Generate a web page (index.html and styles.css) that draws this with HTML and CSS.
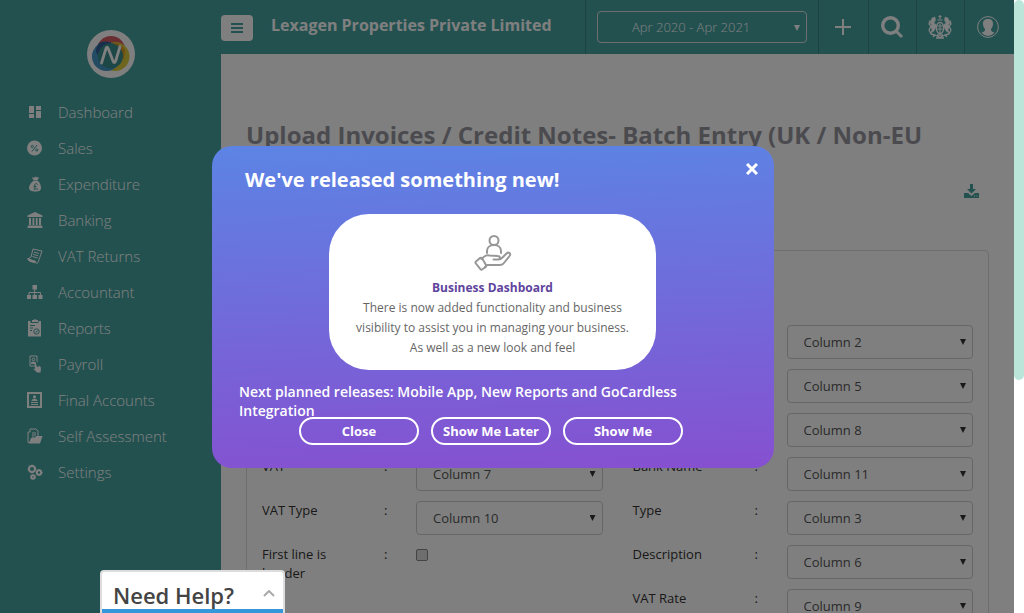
FILE: index.html
```html
<!DOCTYPE html>
<html lang="en">
<head>
<meta charset="utf-8">
<title>Upload Invoices</title>
<link rel="stylesheet" href="styles.css">
</head>
<body>
<div class="app">
  <aside class="sidebar">
    <a href="#" class="logo" aria-label="Home">
      <svg width="48" height="48" viewBox="0 0 48 48">
        <circle cx="24" cy="24" r="24" fill="#fff"/>
        <circle cx="24" cy="20" r="14" fill="#d45a62"/>
        <circle cx="28" cy="26.500" r="14.500" fill="#dccb3c"/>
        <path d="M24 12.500a15 15 0 0 1 14 7.500l-1 10-6-8z" fill="#dd9b22"/>
        <circle cx="19.500" cy="26.500" r="14.500" fill="#4796c8"/>
        <path d="M9 22a14 14 0 0 1 3-9q6-2.500 12-.5l-2 8-9 9z" fill="#345f98"/>
        <circle cx="23.500" cy="26" r="12.500" fill="#3b8f8c"/>
        <path d="M14.500 33l4.500-14.500q1-2.500 2.200 0L26 31q1.500 3 2.700 0L33 16.500" fill="none" stroke="#fff" stroke-width="2.800" stroke-linecap="round"/>
      </svg>
    </a>
    <nav class="menu">
      <a href="#"><svg viewBox="0 0 16 16"><path d="M2 2h5v7H2zM9 2h5v4H9zM2 10h5v4H2zM9 7h5v7H9z"/></svg>Dashboard</a>
      <a href="#"><svg viewBox="0 0 16 16"><circle cx="7.500" cy="8" r="7.500"/><path class="cut" d="M10 5l-5 6.500"/><circle class="cut" cx="5.300" cy="6.500" r="1.100"/><circle class="cut" cx="9.700" cy="10" r="1.100"/></svg>Sales</a>
      <a href="#"><svg viewBox="0 0 16 16"><path d="M5 1l2 .8L9 .5l1 1 2-.5-1.500 3.500h-4zM6 5h5c2 2 3 4.500 3 6.500 0 3-1.500 4-5.500 4S2 14.500 2 11.500C2 9.500 4 7 6 5z"/><path class="cut" d="M10.500 8.500C9.500 6.800 7.300 7.500 7.800 10c.3 1.500 0 2.500-1 3H11M6.500 10.500h3"/></svg>Expenditure</a>
      <a href="#"><svg viewBox="0 0 16 16"><path d="M8 0l7.500 3.500V5H.5V3.500zM2 6h2v7H2zM5.500 6h1.800v7H5.500zM8.800 6h1.800v7H8.800zM12 6h2v7h-2zM1 13.500h14v1H.5V16h15v-1.500H1z"/></svg>Banking</a>
      <a href="#"><svg viewBox="0 0 16 16"><path class="line" d="M6 1l9 2-4 11.500c-1 1.500-3 .5-2.500-1L1 11l3-2z"/><path d="M0 10l8.500 3c-.5 1 .2 2 1.500 2.200C4 15 .5 13 0 10z"/><path class="line" d="M7 4l5 1.500M6.200 6.300l5 1.500M5.500 8.500l5 1.500"/></svg>VAT Returns</a>
      <a href="#"><svg viewBox="0 0 16 16"><path d="M5.500 1h4.500v4.500H5.500zM0 11h4v4H0zM5.500 11h4.500v4H5.500zM11.500 11h4v4h-4z"/><path class="line" d="M7.700 5v6M2 11V8.500h11.500V11"/></svg>Accountant</a>
      <a href="#"><svg viewBox="0 0 16 18"><path d="M1 2h2.500v2h8V2h2.500v15.500H1zM5 1h1.500L8 0l1.500 1H11v2H5z"/><path class="cut" d="M3 6.500h5M3 9h3M3 11.500h2"/><circle class="cut" cx="9.500" cy="12.500" r="2.700"/><path class="cut" d="M8.500 13.500l2.500-2"/></svg>Reports</a>
      <a href="#"><svg viewBox="0 0 16 18"><path class="line" d="M8 11H3V1h7v6"/><circle class="line" cx="6.500" cy="4.500" r="1.300"/><path d="M4 9V7.500l2.500-1L9 7.500V9z"/><path d="M7.500 7.500c1 0 1.200.5 1.500 1.500l1 3 3-1 1 2-.5 4.500h-3.500L6 13.500l2 .5z"/></svg>Payroll</a>
      <a href="#"><svg viewBox="0 0 16 16"><rect class="line bold" x="1" y="1" width="13" height="14"/><circle cx="7.500" cy="4.800" r="1.600"/><path d="M4.500 9c0-3 6-3 6 0zM4 10h7v1H4zM4 12h7v1H4z"/></svg>Final Accounts</a>
      <a href="#"><svg viewBox="0 0 16 16"><path class="line" d="M3 14.500H1V4h2V1h6l2 2v5M5 5h4M5 7h4M5 9h2"/><path d="M4 10l4-.5 1-1.500h6.500L13 15.500H2z"/></svg>Self Assessment</a>
      <a href="#"><svg viewBox="0 0 16 16"><circle class="line bold" cx="5" cy="5" r="3"/><circle class="line bold" cx="12" cy="8.500" r="2.200"/><circle class="line bold" cx="6" cy="13" r="1.800"/><path class="line" d="M5 .5V2M5 8v1.500M.5 5H2M8 5h1.500M1.800 1.800l1.200 1.200M7 7l1.200 1.200M12 5v1.500M12 10.500V12M14.500 8.500h1"/></svg>Settings</a>
    </nav>
  </aside>

  <div class="main">
    <header class="topbar">
      <div class="brand">
        <button class="burger" aria-label="Toggle menu"><span></span><span></span><span></span></button>
        <strong class="company">Lexagen Properties Private Limited</strong>
      </div>
      <div class="cell period">
        <div class="pick"><select aria-label="Accounting period"><option>Apr 2020 - Apr 2021</option></select></div>
      </div>
      <button class="cell" aria-label="Add"><svg width="16" height="16" viewBox="0 0 16 16"><path d="M8 0v16M0 8h16" stroke="#fff" stroke-width="2"/></svg></button>
      <button class="cell narrow" aria-label="Search"><svg width="22" height="22" viewBox="0 0 22 22" fill="none" stroke="#fff"><circle cx="9.500" cy="9.500" r="7.800" stroke-width="3.400"/><path d="M14 15.500l1.500-1.500 6 6-1.500 1.500z" fill="#fff" stroke-width="1"/></svg></button>
      <button class="cell narrow" aria-label="Government gateway"><svg width="24" height="24" viewBox="0 0 24 24" fill="#fff" stroke="#fff" stroke-linejoin="round"><path d="M12 0v4M10.500 1.500h3M9.500 5h5" stroke-width="1.200"/><ellipse cx="12" cy="13" rx="3.600" ry="5.500" fill="none" stroke-width="1.500"/><path d="M9.500 11h5M9.500 14h5M12 9v9" stroke-width="1"/><path d="M4 3l3-1 .5 3L6 8l2.500 2-1 3L6 16l-3 2 1-4-2-2 2-2-2-2zM20 3l-3-1-.5 3L18 8l-2.500 2 1 3 1.500 3 3 2-1-4 2-2-2-2 2-2z" stroke-width=".5"/><path d="M2 5.500L1 9l2 2-2 4 2 4 4 1 5 2.500 5-2.500 4-1 2-4-2-4 2-2-1-3.500M7 20l-2 2M17 20l2 2M9 20h6M8 23h8" fill="none" stroke-width="1.300"/></svg></button>
      <button class="cell user" aria-label="Profile"><svg width="22" height="22" viewBox="0 0 22 22"><circle cx="11" cy="11" r="10.400" fill="none" stroke="#fff" stroke-width="1"/><path d="M11 3c3.500 0 5.200 2 5 5-.1 2-1 4-2 5 0 2 .5 2.300 2 3l1.500.7A9 9 0 0 1 11 20a9 9 0 0 1-6.500-3.300L6 16c1.500-.7 2-1 2-3-1-1-1.900-3-2-5C5.800 5 7.500 3 11 3z" fill="#fff"/></svg></button>
    </header>

    <main class="content">
      <h1>Upload Invoices / Credit Notes- Batch Entry (UK / Non-EU</h1>
      <div class="tools">
        <button class="download" aria-label="Download"><svg width="15" height="14" viewBox="0 0 15 14"><path d="M6 0h3v5h3L7.500 9.500 3 5h3zM0 9h4l3.500 3L11 9h4v5H0z" fill="#44a3a0"/><path d="M10 12h1M12.500 12h1" stroke="#fff"/></svg></button>
      </div>
      <form class="card">
        <div class="fields">
          <div class="field"></div>
          <div class="field"></div>
          <div class="field"></div>
          <div class="field"><label for="l4">VAT</label><span>:</span><div class="pick"><select id="l4"><option>Column 7</option></select></div></div>
          <div class="field"><label for="l5">VAT Type</label><span>:</span><div class="pick"><select id="l5"><option>Column 10</option></select></div></div>
          <div class="field"><label for="l6">First line is header</label><span>:</span><input type="checkbox" id="l6"></div>
        </div>
        <div class="fields">
          <div class="field unlabelled"><div class="pick"><select aria-label="Second field"><option>Column 2</option></select></div></div>
          <div class="field unlabelled"><div class="pick"><select aria-label="Fifth field"><option>Column 5</option></select></div></div>
          <div class="field unlabelled"><div class="pick"><select aria-label="Eighth field"><option>Column 8</option></select></div></div>
          <div class="field"><label for="r4">Bank Name</label><span>:</span><div class="pick"><select id="r4"><option>Column 11</option></select></div></div>
          <div class="field"><label for="r5">Type</label><span>:</span><div class="pick"><select id="r5"><option>Column 3</option></select></div></div>
          <div class="field"><label for="r6">Description</label><span>:</span><div class="pick"><select id="r6"><option>Column 6</option></select></div></div>
          <div class="field"><label for="r7">VAT Rate</label><span>:</span><div class="pick"><select id="r7"><option>Column 9</option></select></div></div>
        </div>
      </form>
    </main>
  </div>
  <div class="backdrop"></div>
</div>
<div class="scrollbar"><div class="thumb"></div></div>

<section class="modal" role="dialog" aria-labelledby="news">
  <header class="modal-head">
    <h2 id="news">We've released something new!</h2>
    <button class="dismiss" aria-label="Dismiss"><svg width="12" height="12" viewBox="0 0 12 12"><path d="M1 1l10 10M11 1L1 11" stroke="#fff" stroke-width="3"/></svg></button>
  </header>
  <div class="feature">
    <svg width="38" height="38" viewBox="0 0 38 38" fill="none" stroke="#979797" stroke-width="2" stroke-linejoin="round" stroke-linecap="round">
      <circle cx="20" cy="6.500" r="4.500"/>
      <path d="M13 19v-2c0-8 14-8 14 0v2"/>
      <path d="M7.500 25c4-4 5-4 8-3.500l8 .5c3 0 3 3 1 3.500h-5 5c2 0 3-1 4-2l4-4c2-2 5 0 3 2.500l-6 7.500c-1 1.500-2 1.500-4 1.500H13l-2 2"/>
      <path d="M2 27.500l4-3.500c1-.5 2 0 2.500 1l3.500 6c.5 1 0 2-1 2.500L8 35.500c-1 .5-1.500 0-2-.8L1.500 29c-.3-.5 0-1 .5-1.500z"/>
    </svg>
    <h3>Business Dashboard</h3>
    <p>There is now added functionality and business visibility to assist you in managing your business. As well as a new look and feel</p>
  </div>
  <p class="next">Next planned releases: Mobile App, New Reports and GoCardless Integration</p>
  <div class="actions"><button>Close</button><button>Show Me Later</button><button>Show Me</button></div>
</section>

<button class="help"><span>Need Help?</span><svg width="12" height="7" viewBox="0 0 12 7"><path d="M1 6l5-5 5 5" fill="none" stroke="#aaa" stroke-width="2"/></svg></button>
</body>
</html>
```
FILE: styles.css
```css
* { box-sizing: border-box; }
body { margin: 0; display: flex; height: 100vh; overflow: hidden; font: 13px/19px "Open Sans", sans-serif; color: #333; background: #fff; }
button, select, input { font: inherit; color: inherit; margin: 0; }
button { border: 0; padding: 0; background: none; }
h1, h2, h3, p { margin: 0; }
svg { display: block; flex: none; }

.app { position: relative; flex: 1; display: flex; min-width: 0; overflow: hidden; }
.backdrop { position: absolute; inset: 0; background: rgba(0, 0, 0, 0.5); }
.scrollbar { width: 10px; }
.thumb { height: 62%; border-radius: 5px; background: #bbe5d8; }

.sidebar { width: 221px; flex: none; background: #44a3a0; padding-top: 30px; }
.logo { display: block; width: 48px; margin: 0 auto 16px; }
.menu a { display: flex; align-items: center; gap: 15px; height: 36px; padding-left: 27px; color: #fff; text-decoration: none; font-size: 15px; font-weight: 300; }
.menu svg { width: 16px; height: 16px; fill: #fff; }
.menu svg[viewBox="0 0 16 18"] { height: 18px; }
.menu .line { fill: none; stroke: #fff; stroke-width: 1; }
.menu .bold { stroke-width: 2; }
.menu .cut { fill: none; stroke: #44a3a0; stroke-width: 1; }

.main { flex: 1; min-width: 0; }
.topbar { display: flex; height: 54px; background: #44a3a0; color: #fff; }
.brand { flex: 1; display: flex; gap: 18px; padding-top: 15px; }
.burger { width: 32px; height: 26px; border-radius: 4px; background: #fff; display: flex; flex-direction: column; align-items: center; justify-content: center; gap: 2px; }
.burger span { width: 12px; height: 2px; background: #44a3a0; }
.company { font-size: 16px; line-height: 20px; }
.cell { display: flex; align-items: center; justify-content: center; width: 50px; padding-right: 2px; border-left: 1px solid #348785; }
.cell.narrow { width: 48px; }
.cell.user { padding-right: 4px; }
.cell.period { width: 233px; padding: 0 11px; }

.pick { position: relative; flex: 1; height: 34px; }
.pick::after { content: ""; position: absolute; right: 7px; top: 14px; width: 6px; height: 6px; background: currentColor; clip-path: polygon(0 0, 100% 0, 50% 100%); pointer-events: none; }
.pick select { appearance: none; width: 100%; height: 100%; padding: 0 16px; border: 1px solid #ccc; border-radius: 4px; background: transparent; color: #555; }
.period .pick { height: 32px; }
.period select { color: #fff; font-weight: 300; padding-left: 34px; border-color: #ddd; }

.content { padding: 66px 25px 0; }
h1 { font-size: 24px; line-height: 30px; font-weight: 700; color: #96969e; }
.tools { display: flex; justify-content: flex-end; padding: 34px 10px 52px; }
.card { display: grid; grid-template-columns: 1fr 1fr; border: 1px solid #ddd; border-radius: 4px; padding-top: 74px; min-height: 480px; }
.fields { padding: 0 15px; display: flex; flex-direction: column; gap: 10px; }
.field { display: flex; align-items: flex-start; height: 34px; }
.field.unlabelled { padding-left: 154px; }
.field label { width: 122px; padding-right: 30px; flex: none; }
.field > span { width: 32px; flex: none; }
.field input { appearance: none; width: 12px; height: 12px; margin-top: 4px; border: 1px solid #888; border-radius: 2px; background: #ddd; }

.modal { position: absolute; left: 212px; top: 146px; width: 562px; padding: 17px 16px 23px 27px; border-radius: 20px; color: #fff; background: linear-gradient(178deg, #5c84e5, #8650d0); }
.modal-head { display: flex; justify-content: space-between; align-items: flex-start; padding-left: 6px; margin-bottom: 17px; }
h2 { font-size: 20px; line-height: 34px; }
.feature { width: 327px; margin-left: 90px; padding: 20px 20px 12px; border-radius: 40px; background: #fff; text-align: center; color: #666; font-size: 12px; line-height: 20px; }
.feature svg { margin: 0 auto 6px; }
.feature h3 { font-size: 12px; color: #60449c; }
.next { font-size: 14px; font-weight: 600; margin-top: 12px; padding-right: 40px; }
.actions { display: flex; gap: 12px; margin: -3px 0 0 60px; }
.actions button { width: 120px; height: 28px; border: 2px solid #fff; border-radius: 14px; font-weight: 700; }

.help { position: absolute; left: 100px; bottom: 0; width: 185px; height: 43px; display: flex; justify-content: space-between; align-items: flex-start; padding: 7px 8px 0 11px; border: 2px solid #ddd; border-bottom: 0; border-radius: 4px 4px 0 0; background: linear-gradient(#3498db, #3498db) 0 100% / 100% 4px no-repeat #fff; color: #444; font-size: 22px; line-height: 32px; font-weight: 600; }
.help svg { margin-top: 11px; }
```
